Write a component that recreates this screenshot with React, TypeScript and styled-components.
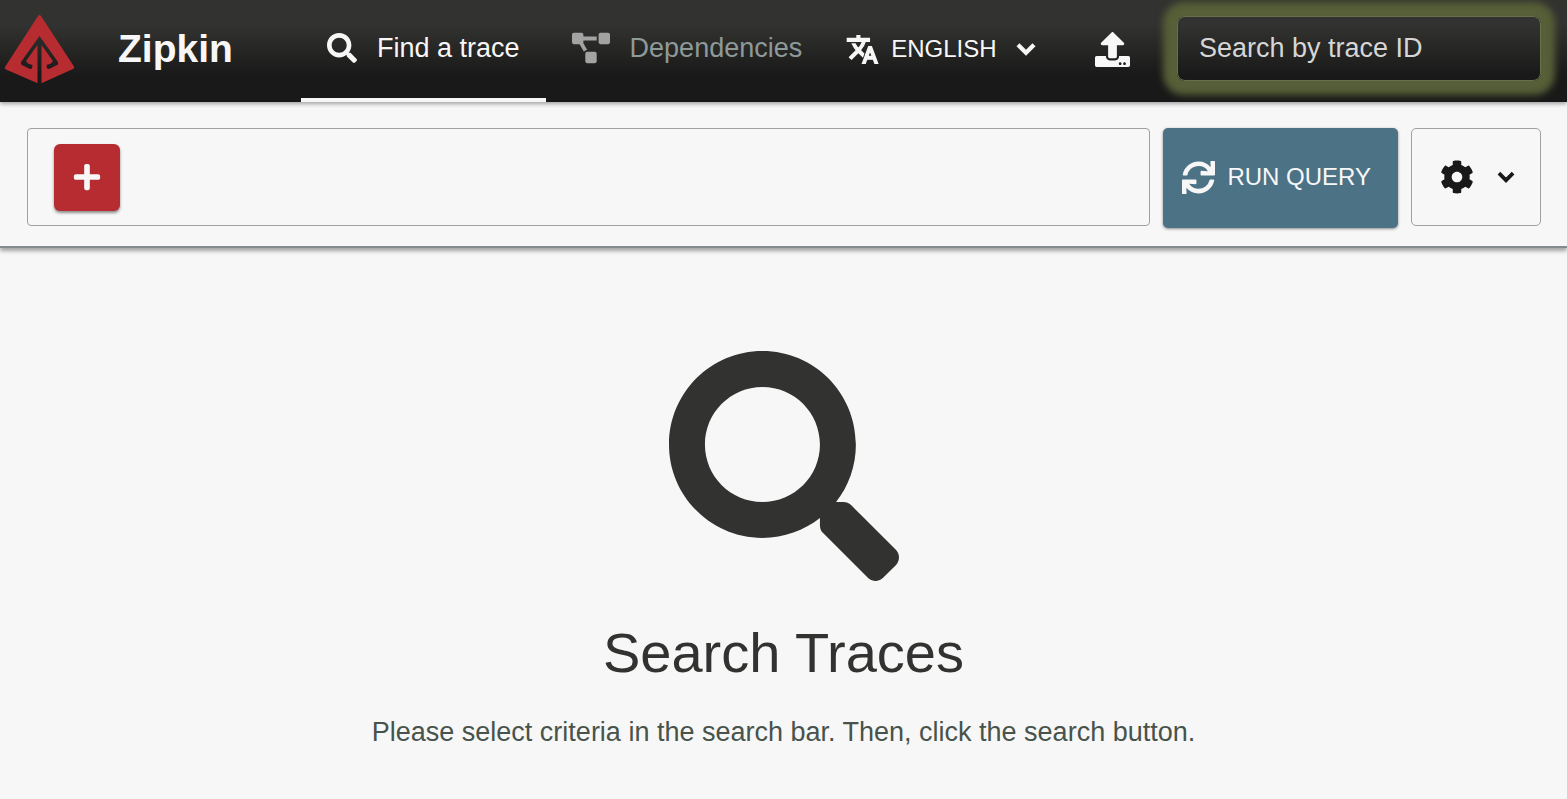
import React from "react";
import styled, { createGlobalStyle } from "styled-components";
import { FaSearch, FaProjectDiagram, FaUpload, FaSync, FaCog, FaPlus } from "react-icons/fa";
import { MdTranslate, MdExpandMore } from "react-icons/md";

const GlobalStyle = createGlobalStyle`
  * { box-sizing: border-box; }
  body {
    margin: 0;
    background: #f7f7f7;
    font-family: "Liberation Sans", Arial, sans-serif;
  }
  button, input { font-family: inherit; }
`;

const Header = styled.header`
  position: relative;
  z-index: 1;
  display: flex;
  align-items: center;
  height: 102px;
  padding: 0 26px 0 4px;
  color: #f7f7f7;
  background: linear-gradient(#323230 24%, #191919 74%);
  box-shadow: 0 2px 4px #a3a3a3;
`;

const Brand = styled.a`
  display: flex;
  align-items: center;
  gap: 42px;
  width: 297px;
  height: 100%;
  padding-bottom: 4px;
  color: inherit;
  font-size: 39px;
  font-weight: bold;
  text-decoration: none;
`;

const Nav = styled.nav`
  display: flex;
  align-self: stretch;
`;

const Tab = styled.a<{ $active?: boolean }>`
  display: flex;
  align-items: center;
  gap: 20px;
  padding: 0 26px 2px;
  border-bottom: 4px solid ${(p) => (p.$active ? "#f7f7f7" : "transparent")};
  color: ${(p) => (p.$active ? "#f7f7f7" : "#8e9a99")};
  font-size: 27px;
  white-space: nowrap;
  text-decoration: none;

  svg { color: ${(p) => (p.$active ? "#f7f7f7" : "#a3a3a3")}; }
`;

const PlainButton = styled.button`
  display: flex;
  align-items: center;
  padding: 0 0 4px;
  border: 0;
  color: inherit;
  background: none;
  font-size: 24px;
  white-space: nowrap;
`;

const LanguageButton = styled(PlainButton)`
  gap: 12px;
  margin-left: 18px;
`;

const UploadButton = styled(PlainButton)`
  margin: 0 auto 0 52px;
`;

const TranslateIcon = styled(MdTranslate)`
  stroke-width: 1px;

  path[fill="none"] { stroke: none; }
`;

const Chevron = styled(MdExpandMore)`
  stroke-width: 1px;

  path[fill="none"] { stroke: none; }
`;

const TraceInput = styled.input`
  width: 364px;
  height: 65px;
  margin-bottom: 6px;
  padding: 0 21px;
  border: 1px solid #66704a;
  border-radius: 8px;
  outline: 0;
  color: #f7f7f7;
  background: transparent;
  box-shadow: 0 0 7px 14px #565f37;
  font-size: 27px;

  &::placeholder { color: #d6d6d6; opacity: 1; }
`;

const SearchBar = styled.section`
  display: flex;
  gap: 13px;
  padding: 26px 26px 18px 27px;
  border-bottom: 2px solid #858b8d;
  background: #f7f7f7;
  box-shadow: 0 3px 4px #a3a3a3;
`;

const Criteria = styled.div`
  display: flex;
  flex: 1;
  align-items: center;
  height: 98px;
  padding: 0 26px;
  border: 1px solid #a0a0a0;
  border-radius: 4px;
`;

const AddButton = styled.button`
  display: grid;
  place-items: center;
  width: 66px;
  height: 67px;
  padding: 0;
  border: 0;
  border-radius: 6px;
  color: #f7f7f7;
  background: #b72c30;
  box-shadow: 0 2px 3px #8c8c8c;
`;

const RunButton = styled.button`
  display: flex;
  align-items: center;
  gap: 12px;
  height: 100px;
  padding: 0 27px 2px 19px;
  border: 0;
  border-radius: 5px;
  color: #f7f7f7;
  background: #4c7286;
  box-shadow: 0 1px 3px #8c8c8c;
  font-size: 24px;
  white-space: nowrap;
`;

const SettingsButton = styled.button`
  display: flex;
  align-items: center;
  justify-content: center;
  gap: 17px;
  width: 130px;
  height: 98px;
  padding: 0 0 0 8px;
  border: 1px solid #a0a0a0;
  border-radius: 5px;
  color: #191919;
  background: transparent;
`;

const EmptyState = styled.main`
  display: flex;
  flex-direction: column;
  align-items: center;
  padding: 103px 24px 48px;
  color: #323230;
`;

const Title = styled.h1`
  margin: 40px 0 31px;
  font-size: 56px;
  font-weight: normal;
  line-height: 64px;
`;

const Hint = styled.p`
  margin: 0;
  color: #47534b;
  font-size: 27px;
  line-height: 32px;
  text-align: center;
`;

const Logo = () => (
  <svg width="72" height="72" viewBox="0 0 72 72" aria-hidden="true">
    <path
      fill="#b72c30"
      d="M34 3Q35.500 1 37 3L70 53.500Q71 55 69 56L38 70H37.500V32L49 48L47 50.500L42.500 52L43 55.500L45 56L54 51.500V49L35.500 23L17 49V51.500L26 56L28 55.500L28.500 52L24 50.500L22 48L33.500 32V70H33L2 56.500Q0 55.500 1 54Z"
    />
  </svg>
);

export default function App() {
  return (
    <>
      <GlobalStyle />
      <Header>
        <Brand href="#">
          <Logo />
          Zipkin
        </Brand>
        <Nav>
          <Tab href="#search" $active>
            <FaSearch size={30} />
            Find a trace
          </Tab>
          <Tab href="#dependencies">
            <FaProjectDiagram size={38} />
            Dependencies
          </Tab>
        </Nav>
        <LanguageButton type="button">
          <TranslateIcon size={33} />
          ENGLISH
          <Chevron size={34} />
        </LanguageButton>
        <UploadButton type="button" aria-label="Upload trace">
          <FaUpload size={35} />
        </UploadButton>
        <TraceInput type="text" aria-label="Search by trace ID" placeholder="Search by trace ID" />
      </Header>
      <SearchBar>
        <Criteria>
          <AddButton type="button" aria-label="Add criterion">
            <FaPlus size={30} />
          </AddButton>
        </Criteria>
        <RunButton type="button">
          <FaSync size={33} />
          RUN QUERY
        </RunButton>
        <SettingsButton type="button" aria-label="Settings">
          <FaCog size={34} />
          <Chevron size={30} />
        </SettingsButton>
      </SearchBar>
      <EmptyState>
        <FaSearch size={230} />
        <Title>Search Traces</Title>
        <Hint>Please select criteria in the search bar. Then, click the search button.</Hint>
      </EmptyState>
    </>
  );
}
